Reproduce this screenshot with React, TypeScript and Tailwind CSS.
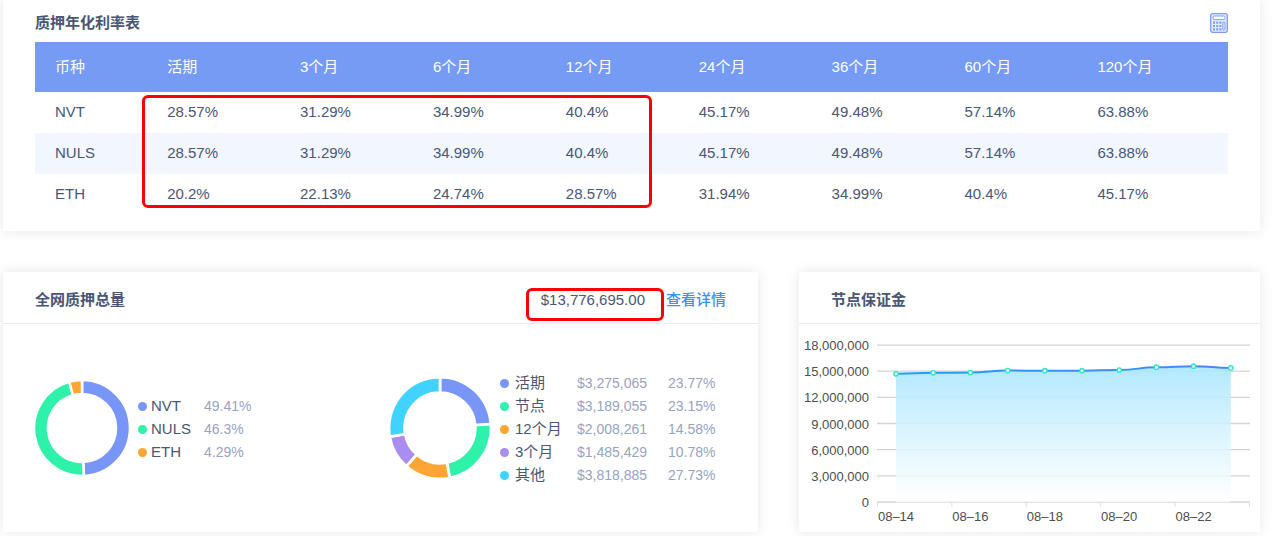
import React from 'react'

const periods = ['活期', '3个月', '6个月', '12个月', '24个月', '36个月', '60个月', '120个月']

const rates = [
    { coin: 'NVT', values: ['28.57%', '31.29%', '34.99%', '40.4%', '45.17%', '49.48%', '57.14%', '63.88%'] },
    { coin: 'NULS', values: ['28.57%', '31.29%', '34.99%', '40.4%', '45.17%', '49.48%', '57.14%', '63.88%'] },
    { coin: 'ETH', values: ['20.2%', '22.13%', '24.74%', '28.57%', '31.94%', '34.99%', '40.4%', '45.17%'] },
]

const coins = [
    { name: 'NVT', percent: 49.41, color: '#7796f7' },
    { name: 'NULS', percent: 46.3, color: '#2ff2aa' },
    { name: 'ETH', percent: 4.29, color: '#ffa533' },
]

const terms = [
    { name: '活期', amount: '$3,275,065', percent: 23.77, color: '#7796f7' },
    { name: '节点', amount: '$3,189,055', percent: 23.15, color: '#2ff2aa' },
    { name: '12个月', amount: '$2,008,261', percent: 14.58, color: '#ffa533' },
    { name: '3个月', amount: '$1,485,429', percent: 10.78, color: '#a98df0' },
    { name: '其他', amount: '$3,818,885', percent: 27.73, color: '#41d3ff' },
]

const deposits = [14.7, 14.81, 14.84, 15.07, 15.06, 15.06, 15.13, 15.46, 15.58, 15.38]

type Slice = { name: string; percent: number; color: string }

function Donut({ data, outer, inner, className }: { data: Slice[]; outer: number; inner: number; className: string }) {
    const total = data.reduce((sum, d) => sum + d.percent, 0)
    const point = (r: number, part: number) => {
        const angle = part * Math.PI * 2
        return `${50 + r * Math.sin(angle)} ${50 - r * Math.cos(angle)}`
    }
    let sum = 0
    return (
        <svg viewBox="0 0 100 100" className={className}>
            {data.map((d) => {
                const start = sum / total
                sum += d.percent
                const end = sum / total
                const large = end - start > 0.5 ? 1 : 0
                return (
                    <path
                        key={d.name}
                        fill={d.color}
                        stroke="#fff"
                        strokeWidth="2.6"
                        d={`M${point(outer, start)} A${outer} ${outer} 0 ${large} 1 ${point(outer, end)} L${point(inner, end)} A${inner} ${inner} 0 ${large} 0 ${point(inner, start)} Z`}
                    />
                )
            })}
        </svg>
    )
}

function DepositChart() {
    const x = (i: number) => 97 + i * 37.2
    const y = (value: number) => 178 - value * 8.72
    const points = deposits.map((d, i) => [x(i), y(d)])
    // horizontal control points keep the curve smooth between days
    const line = points
        .map(([px, py], i) => {
            if (i === 0) return `M${px} ${py}`
            const [lx, ly] = points[i - 1]
            const mid = (lx + px) / 2
            return `C${mid} ${ly} ${mid} ${py} ${px} ${py}`
        })
        .join(' ')

    return (
        <svg viewBox="0 0 461 208" className="block w-full text-[13px]">
            <defs>
                <linearGradient id="area" x1="0" y1="0" x2="0" y2="1">
                    <stop offset="0" stopColor="#a9e6ff" stopOpacity="0.9" />
                    <stop offset="1" stopColor="#fff" stopOpacity="0.8" />
                </linearGradient>
                <linearGradient id="line" x1="0" y1="0" x2="1" y2="0">
                    <stop offset="0" stopColor="#1f9dff" />
                    <stop offset="1" stopColor="#4a86fa" />
                </linearGradient>
            </defs>
            {[18, 15, 12, 9, 6, 3, 0].map((n) => (
                <g key={n}>
                    <line x1="78" x2="451" y1={y(n)} y2={y(n)} stroke="#d4d4d4" strokeWidth="1.3" />
                    <text x="70" y={y(n) + 5} textAnchor="end" fill="#4d4d4d">
                        {n === 0 ? '0' : `${n},000,000`}
                    </text>
                </g>
            ))}
            {[0, 1, 2, 3, 4, 5].map((n) => (
                <line key={n} x1={78.5 + n * 74.4} x2={78.5 + n * 74.4} y1="178" y2="183" stroke="#e0e0e0" />
            ))}
            {['08–14', '08–16', '08–18', '08–20', '08–22'].map((day, i) => (
                <text key={day} x={x(i * 2)} y="197" textAnchor="middle" fill="#4d4d4d">{day}</text>
            ))}
            <path d={`${line} V178 H97 Z`} fill="url(#area)" />
            <path d={line} fill="none" stroke="url(#line)" strokeWidth="2" />
            {points.map(([px, py]) => (
                <circle key={px} cx={px} cy={py} r="2.2" fill="#fff" stroke="#2fe6c0" strokeWidth="1.4" />
            ))}
        </svg>
    )
}

function CalculatorIcon() {
    return (
        <svg viewBox="0 0 18 20" className="h-5 w-[18px]" fill="none" stroke="#7d9bf5">
            <rect x="0.7" y="0.7" width="16.6" height="18.6" rx="2" strokeWidth="1.3" fill="#e6edff" />
            <rect x="3" y="3" width="12" height="3.6" rx="1.2" fill="#fff" />
            <path d="M4 8.6v9M7.2 8.6v9M10.4 8.6v9" strokeWidth="2" strokeDasharray="2.2 1.1" />
            <rect x="12.8" y="9" width="2.2" height="8" rx="0.6" />
        </svg>
    )
}

function Dot({ color }: { color: string }) {
    return <span className="size-[9px] rounded-full" style={{ backgroundColor: color }} />
}

export default function App() {
    return (
        <main className="pl-[3px] pr-5 pb-1 bg-white text-[#4a5675] text-[15px] font-['Liberation_Sans','Noto_Sans_CJK_SC',sans-serif]">
            <section className="px-8 pb-4 bg-white shadow-[0_0_12px_rgba(0,0,0,0.1)]">
                <div className="flex h-[42px] items-center justify-between pt-1">
                    <h2 className="font-bold">质押年化利率表</h2>
                    <button aria-label="计算器"><CalculatorIcon /></button>
                </div>
                <div className="relative">
                    <table className="w-full table-fixed text-left">
                        <thead>
                            <tr className="h-[50px] bg-[#769bf5] text-white">
                                <th className="w-[9.4%] pl-5 font-normal">币种</th>
                                {periods.map((p) => (
                                    <th key={p} className="w-[11.14%] pl-5 font-normal last:w-auto">{p}</th>
                                ))}
                            </tr>
                        </thead>
                        <tbody>
                            {rates.map((row) => (
                                <tr key={row.coin} className="h-[41px] even:bg-[#f2f6fe]">
                                    <td className="pl-5">{row.coin}</td>
                                    {row.values.map((v, i) => (
                                        <td key={i} className="pl-5">{v}</td>
                                    ))}
                                </tr>
                            ))}
                        </tbody>
                    </table>
                    <div className="absolute top-[53px] bottom-[7px] left-[9%] w-[42.7%] rounded-md border-3 border-[#fb0007]" />
                </div>
            </section>

            <div className="mt-[41px] grid grid-cols-[755fr_461fr] gap-[41px]">
                <section className="flex flex-col bg-white shadow-[0_0_12px_rgba(0,0,0,0.1)]">
                    <div className="flex h-[52px] items-center justify-between border-b border-[#e6eaf3] px-8 pt-1.5">
                        <h2 className="font-bold">全网质押总量</h2>
                        <div className="flex items-center gap-[21px]">
                            <span className="relative">
                                $13,776,695.00
                                <span className="absolute -top-[1px] -bottom-[9px] -left-[15px] -right-[19px] rounded-md border-3 border-[#fb0007]" />
                            </span>
                            <a href="#" className="font-medium text-[#3a8ff9]">查看详情</a>
                        </div>
                    </div>
                    <div className="flex flex-1 items-center pl-[29px]">
                        <div className="flex w-[356px] items-center">
                            <Donut data={coins} outer={48} inner={34} className="size-[100px]" />
                            <ul className="ml-1.5 pt-0.5">
                                {coins.map((c) => (
                                    <li key={c.name} className="flex h-[23px] items-center">
                                        <Dot color={c.color} />
                                        <span className="ml-1 w-[53px]">{c.name}</span>
                                        <span className="text-sm text-[#97a3c2]">{c.percent}%</span>
                                    </li>
                                ))}
                            </ul>
                        </div>
                        <Donut data={terms} outer={49} inner={34} className="size-[104px]" />
                        <ul className="ml-2 pt-0.5">
                            {terms.map((t) => (
                                <li key={t.name} className="flex h-[23px] items-center">
                                    <Dot color={t.color} />
                                    <span className="ml-1.5 w-[62px]">{t.name}</span>
                                    <span className="w-[91px] text-sm text-[#97a3c2]">{t.amount}</span>
                                    <span className="text-sm text-[#97a3c2]">{t.percent}%</span>
                                </li>
                            ))}
                        </ul>
                    </div>
                </section>

                <section className="bg-white shadow-[0_0_12px_rgba(0,0,0,0.1)]">
                    <div className="flex h-[52px] items-center border-b border-[#e6eaf3] px-8 pt-1.5">
                        <h2 className="font-bold">节点保证金</h2>
                    </div>
                    <DepositChart />
                </section>
            </div>
        </main>
    )
}
